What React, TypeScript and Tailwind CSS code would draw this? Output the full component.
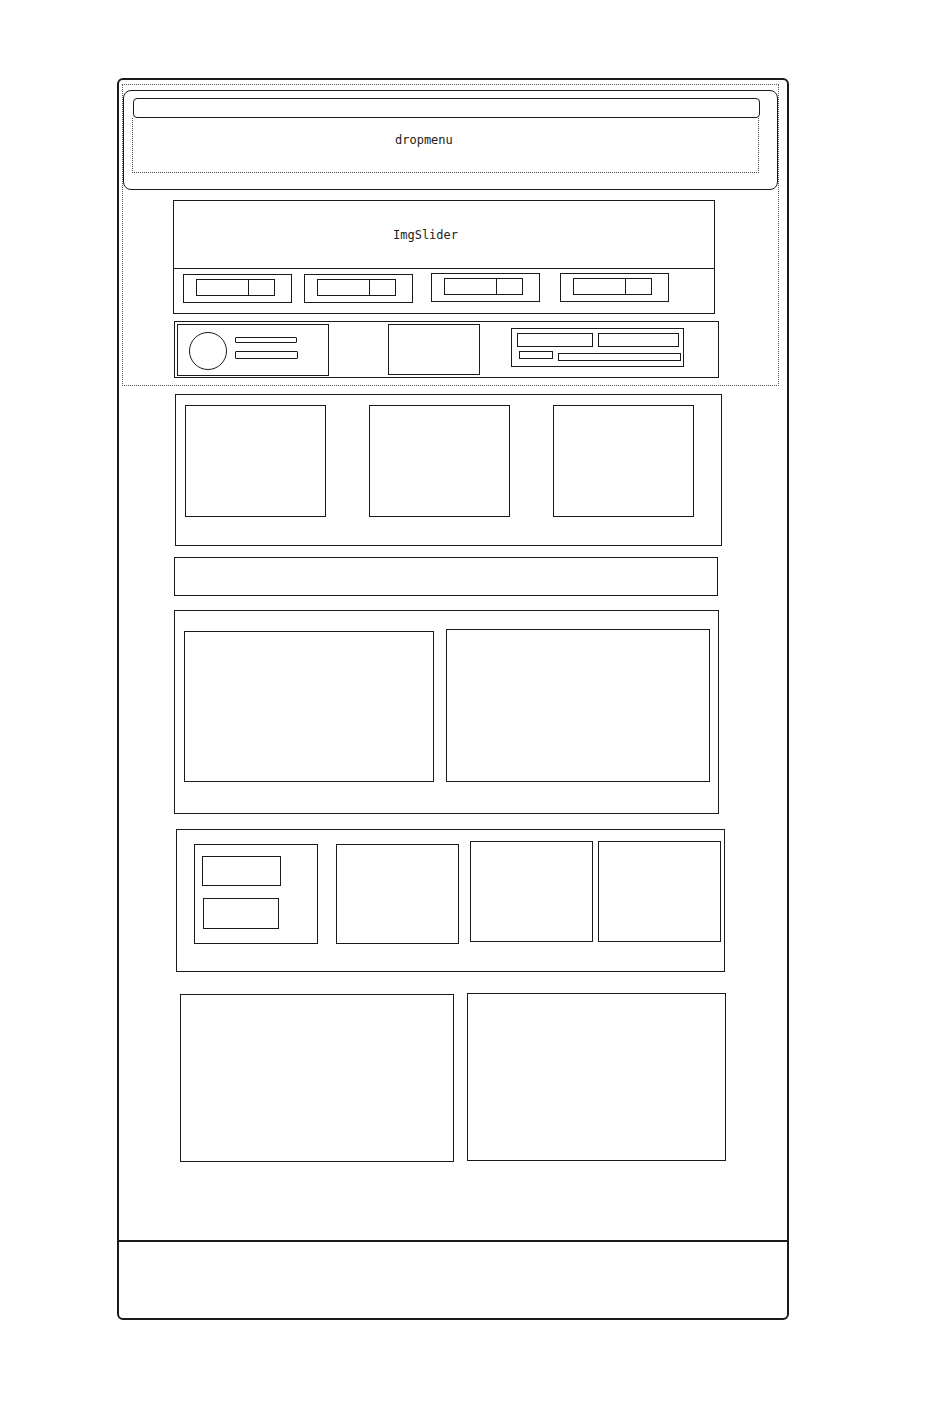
import React from "react";

const B = "border-[1.5px] border-[#1a1a1a]";

function Thumb({ ml, mt }: { ml: string; mt: string }) {
  return (
    <div className={`${B} w-[109px] h-[29px] shrink-0 ${ml} ${mt}`}>
      <div className={`ml-[12px] mt-[4px] w-[79px] h-[17px] border border-[#1a1a1a] flex`}>
        <div className="w-[52px] h-full border-r border-[#1a1a1a]" />
      </div>
    </div>
  );
}

export default function App() {
  return (
    <div className="w-[945px] h-[1420px] bg-white pt-[78px]" style={{ fontFamily: '"DejaVu Sans Mono", "Liberation Mono", monospace' }}>
      <div className="ml-[117px] w-[672px] h-[1242px] rounded-[6px] border-2 border-[#1a1a1a] flex flex-col">
        {/* dotted wrapper */}
        <div className="ml-[3px] mt-[4px] w-[657px] h-[302px] border border-dotted border-[#555] shrink-0">
          {/* header */}
          <div className="ml-[0px] mt-[5px] w-[655px] h-[100px] rounded-[8px] border-[1.5px] border-[#1a1a1a]">
            <div className="ml-[9px] mt-[7px] w-[627px] h-[20px] rounded-[4px] border-[1.5px] border-[#1a1a1a]" />
            <div className="ml-[8px] w-[627px] h-[55px] border border-dotted border-t-0 border-[#444] pl-[262px] pt-[14px] text-[12px] leading-[16px] text-[#222]">
              dropmenu
            </div>
          </div>
          {/* ImgSlider */}
          <div className={`ml-[50px] mt-[10px] w-[542px] h-[114px] ${B} flex flex-col`}>
            <div className="h-[68px] pl-[219px] pt-[26px] text-[12px] leading-[16px] text-[#222] border-b-[1.5px] border-[#1a1a1a]">
              ImgSlider
            </div>
            <div className="flex items-start">
              <Thumb ml="ml-[9px]" mt="mt-[5px]" />
              <Thumb ml="ml-[12px]" mt="mt-[5px]" />
              <Thumb ml="ml-[18px]" mt="mt-[4px]" />
              <Thumb ml="ml-[20px]" mt="mt-[4px]" />
            </div>
          </div>
          {/* profile row */}
          <div className={`ml-[51px] mt-[7px] w-[545px] h-[57px] ${B} flex items-start`}>
            <div className={`ml-[2px] mt-[2px] w-[152px] h-[52px] ${B} flex items-start`}>
              <div className="ml-[11px] mt-[7px] w-[38px] h-[38px] rounded-full border-[1.5px] border-[#1a1a1a] shrink-0" />
              <div className="ml-[8px] mt-[12px] flex flex-col">
                <div className="w-[62px] h-[6px] border border-[#1a1a1a] rounded-[1px]" />
                <div className="mt-[8px] w-[63px] h-[8px] border border-[#1a1a1a] rounded-[1px]" />
              </div>
            </div>
            <div className={`ml-[59px] mt-[2px] w-[92px] h-[51px] ${B}`} />
            <div className={`ml-[31px] mt-[6px] w-[173px] h-[39px] ${B} flex flex-col`}>
              <div className="flex mt-[4px] ml-[5px]">
                <div className="w-[76px] h-[14px] border border-[#1a1a1a]" />
                <div className="ml-[5px] w-[81px] h-[14px] border border-[#1a1a1a]" />
              </div>
              <div className="flex mt-[4px] ml-[7px] items-start">
                <div className="w-[34px] h-[8px] border border-[#1a1a1a]" />
                <div className="ml-[5px] mt-[2px] w-[123px] h-[8px] border border-[#1a1a1a]" />
              </div>
            </div>
          </div>
        </div>

        {/* three boxes */}
        <div className={`ml-[56px] mt-[8px] w-[547px] h-[152px] ${B} flex items-start shrink-0`}>
          <div className={`ml-[9px] mt-[10px] w-[141px] h-[112px] ${B}`} />
          <div className={`ml-[43px] mt-[10px] w-[141px] h-[112px] ${B}`} />
          <div className={`ml-[43px] mt-[10px] w-[141px] h-[112px] ${B}`} />
        </div>

        {/* bar */}
        <div className={`ml-[55px] mt-[11px] w-[544px] h-[39px] ${B} shrink-0`} />

        {/* two boxes */}
        <div className={`ml-[55px] mt-[14px] w-[545px] h-[204px] ${B} flex items-start shrink-0`}>
          <div className={`ml-[9px] mt-[20px] w-[250px] h-[151px] ${B}`} />
          <div className={`ml-[12px] mt-[18px] w-[264px] h-[153px] ${B}`} />
        </div>

        {/* four boxes */}
        <div className={`ml-[57px] mt-[15px] w-[549px] h-[143px] ${B} flex items-start shrink-0`}>
          <div className={`ml-[17px] mt-[14px] w-[124px] h-[100px] ${B}`}>
            <div className={`ml-[7px] mt-[11px] w-[79px] h-[30px] ${B}`} />
            <div className={`ml-[8px] mt-[12px] w-[76px] h-[31px] ${B}`} />
          </div>
          <div className={`ml-[18px] mt-[14px] w-[123px] h-[100px] ${B}`} />
          <div className={`ml-[11px] mt-[11px] w-[123px] h-[101px] ${B}`} />
          <div className={`ml-[5px] mt-[11px] w-[123px] h-[101px] ${B}`} />
        </div>

        {/* bottom two boxes */}
        <div className="ml-[61px] mt-[21px] flex items-start shrink-0">
          <div className={`mt-[1px] w-[274px] h-[168px] ${B}`} />
          <div className={`ml-[13px] w-[259px] h-[168px] ${B}`} />
        </div>

        <div className="flex-1" />
        {/* footer */}
        <div className="h-[78px] border-t-2 border-[#1a1a1a] shrink-0" />
      </div>
    </div>
  );
}
